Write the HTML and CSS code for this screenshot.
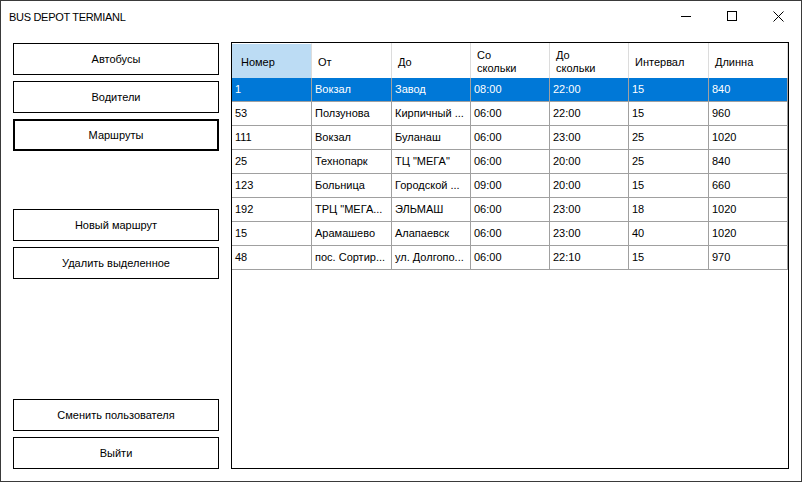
FILE: index.html
```html
<!DOCTYPE html>
<html lang="ru">
<head>
<meta charset="utf-8">
<title>BUS DEPOT TERMIANL</title>
<link rel="stylesheet" href="styles.css">
</head>
<body>
<div class="window">
  <div class="titlebar">
    <div class="title">BUS DEPOT TERMIANL</div>
    <div class="controls">
      <div class="ctrl"><svg width="10" height="10" viewBox="0 0 10 10"><path d="M0 5.5H10" stroke="#000" stroke-width="1"/></svg></div>
      <div class="ctrl"><svg width="10" height="10" viewBox="0 0 10 10"><rect x="0.5" y="0.5" width="9" height="9" fill="none" stroke="#000" stroke-width="1"/></svg></div>
      <div class="ctrl"><svg width="11" height="11" viewBox="0 0 11 11"><path d="M0.5 0.5L10.5 10.5M10.5 0.5L0.5 10.5" stroke="#000" stroke-width="1"/></svg></div>
    </div>
  </div>
  <div class="main">
    <div class="sidebar">
      <div class="group">
        <div class="btn">Автобусы</div>
        <div class="btn">Водители</div>
        <div class="btn focused">Маршруты</div>
      </div>
      <div class="group group-mid">
        <div class="btn">Новый маршрут</div>
        <div class="btn">Удалить выделенное</div>
      </div>
      <div class="group group-bottom">
        <div class="btn">Сменить пользователя</div>
        <div class="btn">Выйти</div>
      </div>
    </div>
    <div class="grid">
      <div class="table">
        <div class="hcell hsel first">Номер</div>
        <div class="hcell">От</div>
        <div class="hcell">До</div>
        <div class="hcell">Со<br>скольки</div>
        <div class="hcell">До<br>скольки</div>
        <div class="hcell">Интервал</div>
        <div class="hcell">Длинна</div>

        <div class="cell sel">1</div><div class="cell sel">Вокзал</div><div class="cell sel">Завод</div><div class="cell sel">08:00</div><div class="cell sel">22:00</div><div class="cell sel">15</div><div class="cell sel">840</div>

        <div class="cell">53</div><div class="cell">Ползунова</div><div class="cell">Кирпичный ...</div><div class="cell">06:00</div><div class="cell">22:00</div><div class="cell">15</div><div class="cell">960</div>

        <div class="cell">111</div><div class="cell">Вокзал</div><div class="cell">Буланаш</div><div class="cell">06:00</div><div class="cell">23:00</div><div class="cell">25</div><div class="cell">1020</div>

        <div class="cell">25</div><div class="cell">Технопарк</div><div class="cell">ТЦ "МЕГА"</div><div class="cell">06:00</div><div class="cell">20:00</div><div class="cell">25</div><div class="cell">840</div>

        <div class="cell">123</div><div class="cell">Больница</div><div class="cell">Городской ...</div><div class="cell">09:00</div><div class="cell">20:00</div><div class="cell">15</div><div class="cell">660</div>

        <div class="cell">192</div><div class="cell">ТРЦ "МЕГА...</div><div class="cell">ЭЛЬМАШ</div><div class="cell">06:00</div><div class="cell">23:00</div><div class="cell">18</div><div class="cell">1020</div>

        <div class="cell">15</div><div class="cell">Арамашево</div><div class="cell">Алапаевск</div><div class="cell">06:00</div><div class="cell">23:00</div><div class="cell">40</div><div class="cell">1020</div>

        <div class="cell">48</div><div class="cell">пос. Сортир...</div><div class="cell">ул. Долгопо...</div><div class="cell">06:00</div><div class="cell">22:10</div><div class="cell">15</div><div class="cell">970</div>
      </div>
    </div>
  </div>
</div>
</body>
</html>
```

FILE: styles.css
```css
* { box-sizing: border-box; }
html, body { margin: 0; padding: 0; background: #fff; }
body { font-family: "Liberation Sans", Arial, sans-serif; font-size: 11px; color: #000; }

.window {
  width: 802px;
  height: 482px;
  border: 1px solid #3a3a3a;
  background: #fff;
  display: flex;
  flex-direction: column;
}

.titlebar {
  height: 30px;
  display: flex;
  align-items: center;
}
.title {
  flex: 1;
  padding-left: 8px;
  padding-top: 1px;
  font-size: 11px;
  letter-spacing: -0.3px;
  color: #000;
}
.controls { display: flex; height: 30px; }
.ctrl {
  width: 46px;
  height: 30px;
  display: flex;
  align-items: center;
  justify-content: center;
}

.main {
  flex: 1;
  display: flex;
  gap: 12px;
  padding: 11px 12px 12px 12px;
  min-height: 0;
}

.sidebar {
  width: 206px;
  flex: none;
  display: flex;
  flex-direction: column;
  padding-top: 1px;
}
.group { display: flex; flex-direction: column; gap: 6px; }
.group-mid { margin-top: 58px; }
.group-bottom { margin-top: auto; }

.btn {
  height: 32px;
  border: 1px solid #000;
  background: #fff;
  display: flex;
  align-items: center;
  justify-content: center;
}
.btn.focused { border-width: 2px; }

.grid {
  width: 558px;
  flex: none;
  border: 1px solid #000;
  background: #fff;
}
.table {
  display: grid;
  grid-template-columns: 80px 80px 79px 79px 79px 80px 79px;
  grid-template-rows: 35px;
  grid-auto-rows: 24px;
}
.hcell {
  height: 35px;
  border-right: 1px solid #dcdcdc;
  padding: 3px 0 0 6px;
  display: flex;
  align-items: center;
  line-height: 13px;
  background: #fff;
}
.hcell.first { padding-left: 9px; }
.hcell.hsel { background: #bcdcf4; border-top: 1px solid #fff; }

.cell {
  border-right: 1px solid #a0a0a0;
  border-bottom: 1px solid #a0a0a0;
  padding-left: 3px;
  line-height: 23px;
  white-space: nowrap;
  overflow: hidden;
}
.cell.sel { background: #0078d7; color: #fff; }
```
